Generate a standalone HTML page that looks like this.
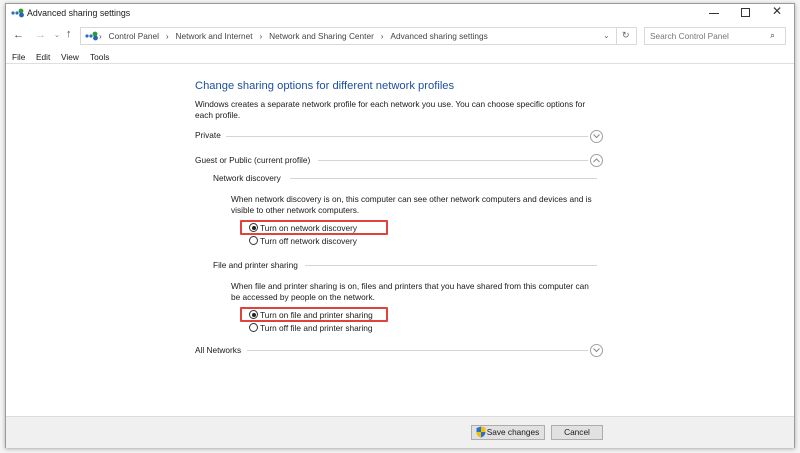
<!DOCTYPE html>
<html><head><meta charset="utf-8"><style>
*{margin:0;padding:0;box-sizing:border-box}
body{width:800px;height:453px;background:#f4f4f4;position:relative;overflow:hidden;font-family:"Liberation Sans",sans-serif;font-size:8.3px;color:#1a1a1a}
.a{position:absolute;white-space:nowrap}
#win{position:absolute;left:5px;top:3px;width:790px;height:445px;background:#fff;border:1px solid #9a9a9a;box-shadow:0 1px 4px rgba(0,0,0,.3)}
.line{position:absolute;height:1px;background:#d5d5d5}
.circ{position:absolute;width:13px;height:13px;border:1px solid #a0a0a0;border-radius:50%}
.circ svg{position:absolute;left:2px;top:3px}
.radio{position:absolute;width:9px;height:9px;border:1px solid #333;border-radius:50%;background:#fff}
.radio.on::after{content:"";position:absolute;left:1.5px;top:1.5px;width:4px;height:4px;border-radius:50%;background:#222}
.red{position:absolute;border:2px solid #e0433a;border-radius:1px}
.btn{position:absolute;height:15px;border:1px solid #adadad;background:#e1e1e1;text-align:center;line-height:13px}
</style></head><body>
<div id="win">
<div class="line" style="left:0;top:412px;width:788px;background:#dcdcdc"></div>
<div style="position:absolute;left:0;top:413px;width:788px;height:31px;background:#f0f0f0"></div>
</div>
<svg class="a" style="left:11px;top:8px" width="14" height="10"><circle cx="2" cy="5" r="1.6" fill="#2d6fbf"/><circle cx="6" cy="5" r="1.6" fill="#2d6fbf"/><circle cx="10" cy="3" r="2.4" fill="#2a9a3a"/><circle cx="10.5" cy="7" r="2.4" fill="#2563b8"/></svg>
<div class="a" style="left:27px;top:8px;font-size:8.8px">Advanced sharing settings</div>
<div class="a" style="left:709px;top:13px;width:10px;height:1px;background:#333"></div>
<div class="a" style="left:741px;top:8px;width:9px;height:9px;border:1px solid #333"></div>
<div class="a" style="left:772px;top:4px;font-size:12px;color:#333">✕</div>
<div class="a" style="left:13px;top:29px;font-size:11px;color:#444">←</div>
<div class="a" style="left:35px;top:29px;font-size:11px;color:#bbb">→</div>
<div class="a" style="left:54px;top:31px;font-size:7px;color:#777">⌄</div>
<div class="a" style="left:66px;top:28px;font-size:11px;color:#444">↑</div>
<div class="a" style="left:80px;top:27px;width:557px;height:18px;border:1px solid #d9d9d9"></div>
<div class="a" style="left:616px;top:27px;width:1px;height:18px;background:#d9d9d9"></div>
<svg class="a" style="left:85px;top:31px" width="14" height="10"><circle cx="2" cy="5" r="1.6" fill="#2d6fbf"/><circle cx="6" cy="5" r="1.6" fill="#2d6fbf"/><circle cx="10" cy="3" r="2.4" fill="#2a9a3a"/><circle cx="10.5" cy="7" r="2.4" fill="#2563b8"/></svg>
<div class="a" style="left:99px;top:31px;color:#444">›&nbsp;&nbsp;&nbsp;Control Panel&nbsp;&nbsp;&nbsp;›&nbsp;&nbsp;&nbsp;Network and Internet&nbsp;&nbsp;&nbsp;›&nbsp;&nbsp;&nbsp;Network and Sharing Center&nbsp;&nbsp;&nbsp;›&nbsp;&nbsp;&nbsp;Advanced sharing settings</div>
<div class="a" style="left:603px;top:31px;font-size:8px;color:#666">⌄</div>
<div class="a" style="left:622px;top:30px;font-size:9px;color:#666">↻</div>
<div class="a" style="left:644px;top:27px;width:142px;height:18px;border:1px solid #d9d9d9"></div>
<div class="a" style="left:650px;top:31px;color:#777">Search Control Panel</div>
<div class="a" style="left:770px;top:30px;font-size:9px;color:#444">⌕</div>
<div class="a" style="left:12px;top:52px">File</div>
<div class="a" style="left:36px;top:52px">Edit</div>
<div class="a" style="left:61px;top:52px">View</div>
<div class="a" style="left:90px;top:52px">Tools</div>
<div class="line" style="left:6px;top:63px;width:788px;background:#e0e0e0"></div>
<div class="a" style="left:195px;top:80px;font-size:11.2px;color:#1e4fa0">Change sharing options for different network profiles</div>
<div class="a" style="left:195px;top:99px">Windows creates a separate network profile for each network you use. You can choose specific options for</div>
<div class="a" style="left:195px;top:110px">each profile.</div>
<div class="a" style="left:195px;top:130px">Private</div>
<div class="line" style="left:226px;top:136px;width:362px"></div>
<div class="circ" style="left:590px;top:130px"><svg width="7" height="5"><path d="M0.5 0.5L3.5 3.5L6.5 0.5" fill="none" stroke="#888"/></svg></div>
<div class="a" style="left:195px;top:155px">Guest or Public (current profile)</div>
<div class="line" style="left:318px;top:160px;width:270px"></div>
<div class="circ" style="left:590px;top:154px"><svg width="7" height="5"><path d="M0.5 4L3.5 1L6.5 4" fill="none" stroke="#888"/></svg></div>
<div class="a" style="left:213px;top:173px">Network discovery</div>
<div class="line" style="left:290px;top:178px;width:307px"></div>
<div class="a" style="left:231px;top:194px">When network discovery is on, this computer can see other network computers and devices and is</div>
<div class="a" style="left:231px;top:205px">visible to other network computers.</div>
<div class="red" style="left:240px;top:220px;width:148px;height:15px"></div>
<div class="radio on" style="left:249px;top:223px"></div>
<div class="a" style="left:260px;top:223px">Turn on network discovery</div>
<div class="radio" style="left:249px;top:236px"></div>
<div class="a" style="left:260px;top:236px">Turn off network discovery</div>
<div class="a" style="left:213px;top:260px">File and printer sharing</div>
<div class="line" style="left:305px;top:265px;width:292px"></div>
<div class="a" style="left:231px;top:281px">When file and printer sharing is on, files and printers that you have shared from this computer can</div>
<div class="a" style="left:231px;top:292px">be accessed by people on the network.</div>
<div class="red" style="left:240px;top:307px;width:148px;height:15px"></div>
<div class="radio on" style="left:249px;top:310px"></div>
<div class="a" style="left:260px;top:310px">Turn on file and printer sharing</div>
<div class="radio" style="left:249px;top:323px"></div>
<div class="a" style="left:260px;top:323px">Turn off file and printer sharing</div>
<div class="a" style="left:195px;top:345px">All Networks</div>
<div class="line" style="left:247px;top:350px;width:341px"></div>
<div class="circ" style="left:590px;top:344px"><svg width="7" height="5"><path d="M0.5 0.5L3.5 3.5L6.5 0.5" fill="none" stroke="#888"/></svg></div>
<div class="btn" style="left:471px;top:425px;width:74px;padding-left:10px">Save changes</div>
<svg class="a" style="left:476px;top:426px" width="10" height="12"><path d="M5 0.5L9.5 2V6C9.5 9 7 11 5 11.5C3 11 0.5 9 0.5 6V2Z" fill="#2a6fd0"/><path d="M5 0.5L9.5 2V6H5ZM5 6V11.5C3 11 .5 9 .5 6Z" fill="#f2c200"/></svg>
<div class="btn" style="left:551px;top:425px;width:52px">Cancel</div>
</body></html>
